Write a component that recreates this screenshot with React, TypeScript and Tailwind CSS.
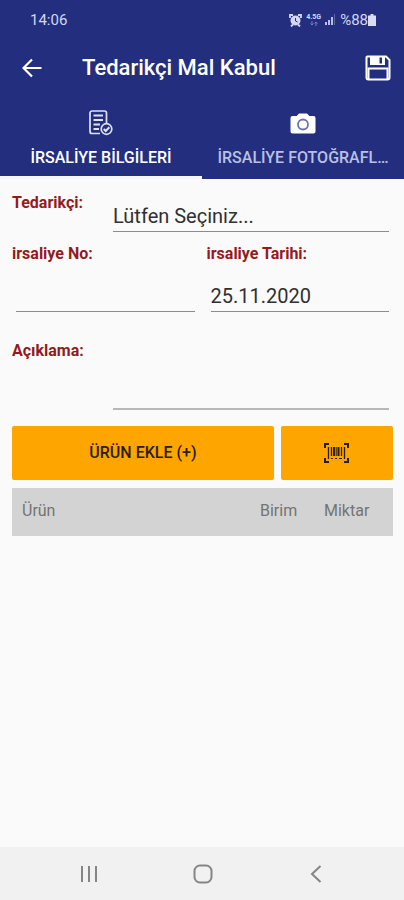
import { useState } from "react";

function AlarmIcon() {
  return (
    <svg width="13" height="13" viewBox="0 0 13 13" fill="none" aria-hidden="true">
      <path d="M1 4V1h3M9 1h3v3M2 12.500l2-2M11 12.500l-2-2" stroke="#d3d7f2" strokeWidth="1.800" />
      <circle cx="6.500" cy="6.500" r="5" fill="#d3d7f2" />
      <path d="M6.500 4v3l2 1" stroke="#232f7e" strokeWidth="1" />
    </svg>
  );
}

function DataArrowsIcon() {
  return (
    <svg width="8" height="5" viewBox="0 0 8 5" fill="none" stroke="#7e86c0" aria-hidden="true">
      <path d="M2 0v4M0.500 2.500 2 4l1.500-1.500M6 5V1M4.500 2.500 6 1l1.500 1.500" strokeWidth="0.900" />
    </svg>
  );
}

function SignalIcon() {
  return (
    <svg width="11" height="12" viewBox="0 0 11 12" fill="#b9bfe6" aria-hidden="true">
      <rect x="0" y="8" width="2" height="3" />
      <rect x="3" y="6" width="2" height="5" />
      <rect x="6" y="3" width="2" height="8" />
      <rect x="9" y="0" width="1" height="11" opacity="0.4" />
    </svg>
  );
}

function BatteryIcon() {
  return (
    <svg width="8" height="12" viewBox="0 0 8 12" fill="#d9dcf5" aria-hidden="true">
      <path d="M2.500 0h3v1.500H8V12H0V1.500h2.500z" />
    </svg>
  );
}

function BackArrow() {
  return (
    <svg width="20" height="20" viewBox="0 0 20 20" fill="none" stroke="white" strokeWidth="2.200" aria-hidden="true">
      <path d="M10 1.500 1.500 10l8.500 8.500M1.500 10h18" />
    </svg>
  );
}

function SaveIcon() {
  return (
    <svg width="26" height="26" viewBox="0 0 26 26" fill="none" stroke="white" aria-hidden="true">
      <path d="M2.500 1.500h18.500L24.500 5v17.500a2 2 0 0 1-2 2h-19a2 2 0 0 1-2-2v-20a1 1 0 0 1 1-1z" strokeWidth="2" />
      <path d="M5 1.500h15v8.500H5z" fill="white" stroke="none" />
      <path d="M14.500 2.500h2.500v6h-2.500z" fill="#232f7e" stroke="none" />
      <path d="M3.500 24V13.500h19V24" strokeWidth="2" />
    </svg>
  );
}

function DocumentIcon() {
  return (
    <svg width="24" height="26" viewBox="0 0 24 26" fill="none" stroke="#dfe2f6" strokeWidth="1.700" aria-hidden="true">
      <path d="M11 23.500H3a2 2 0 0 1-2-2V3a2 2 0 0 1 2-2h12.500a2 2 0 0 1 2 2v10" />
      <path d="M4.500 5.500H14M4.500 10H14M4.500 14.500H11M4.500 19H10" strokeWidth="1.900" />
      <circle cx="17.500" cy="19" r="5.300" />
      <path d="m14.700 19 2 2 3.600-3.800" strokeWidth="2" />
    </svg>
  );
}

function CameraIcon() {
  return (
    <svg width="26" height="21" viewBox="0 0 26 21" aria-hidden="true">
      <path d="M9 0.500h8l2.300 2.500H23.500a2 2 0 0 1 2 2v13.500a2 2 0 0 1-2 2h-21a2 2 0 0 1-2-2V5a2 2 0 0 1 2-2h4.200z" fill="white" />
      <circle cx="13" cy="11.500" r="5" fill="white" stroke="#6d74ab" strokeWidth="1.800" />
    </svg>
  );
}

function BarcodeIcon() {
  return (
    <svg width="25" height="20" viewBox="0 0 25 20" fill="none" stroke="#2b1d00" aria-hidden="true">
      <path d="M1 5V1h4M20 1h4v4M24 15v4h-4M5 19H1v-4" strokeWidth="2" />
      <path d="M4.500 4v12M7.500 4v9M17.500 4v9M20.500 4v12" strokeWidth="1.300" />
      <path d="M10 4v9M14.500 4v9" strokeWidth="2" />
      <path d="M12.200 4v9M7 15.500h2M11 15.500h2M15 15.500h3" strokeWidth="1" />
    </svg>
  );
}

const labelClass = "text-base leading-5 font-bold text-[#931a20]";
const fieldClass =
  "w-full min-w-0 appearance-none rounded-none border-b border-[#8c8c8c] bg-transparent text-xl leading-6 text-[#303030] outline-none";
const tabClass =
  "flex h-[84px] min-w-0 flex-col items-center border-b-3 border-transparent pt-[14px] aria-selected:border-[#f4f6ff]";

export default function App() {
  const [tab, setTab] = useState(0);

  return (
    <div lang="tr" className="flex min-h-screen flex-col bg-[#fafafa] font-['Roboto',sans-serif]">
      <header className="bg-[#232f7e] text-white">
        <div className="flex h-10 items-center justify-between pr-7 pl-[30px] text-[#d3d7f2]">
          <span className="text-[15px] leading-5">14:06</span>
          <div className="flex items-center gap-1">
            <AlarmIcon />
            <span className="flex flex-col items-center">
              <span className="text-[7px] leading-[7px] font-bold">4.5G</span>
              <DataArrowsIcon />
            </span>
            <SignalIcon />
            <span className="flex items-center text-[15px] leading-5">
              %88
              <BatteryIcon />
            </span>
          </div>
        </div>

        <div className="flex h-[55px] items-center pr-[13px] pl-[22px]">
          <button type="button" aria-label="Geri">
            <BackArrow />
          </button>
          <h1 className="ml-10 flex-1 text-[22px] leading-7 font-medium">Tedarikçi Mal Kabul</h1>
          <button type="button" aria-label="Kaydet">
            <SaveIcon />
          </button>
        </div>

        <div role="tablist" className="grid grid-cols-2">
          <button
            type="button"
            role="tab"
            aria-selected={tab === 0}
            onClick={() => setTab(0)}
            className={`${tabClass} text-white`}
          >
            <span className="flex h-7 items-center">
              <DocumentIcon />
            </span>
            <span className="mt-[11px] text-base leading-5 font-medium whitespace-nowrap">İRSALİYE BİLGİLERİ</span>
          </button>
          <button
            type="button"
            role="tab"
            aria-selected={tab === 1}
            onClick={() => setTab(1)}
            className={`${tabClass} text-[#b9c0e4]`}
          >
            <span className="flex h-7 items-center">
              <CameraIcon />
            </span>
            <span className="mt-[11px] text-base leading-5 font-medium whitespace-nowrap">İRSALİYE FOTOĞRAFL…</span>
          </button>
        </div>
      </header>

      <main className="flex-1 pt-[14px] pr-[11px] pl-3">
        <form onSubmit={(event) => event.preventDefault()}>
          <div className="flex pr-1">
            <label htmlFor="supplier" className={`${labelClass} w-[101px] shrink-0`}>
              Tedarikçi:
            </label>
            <select id="supplier" className={`${fieldClass} h-[39px] pt-2`}>
              <option>Lütfen Seçiniz...</option>
            </select>
          </div>

          <div className="mt-3 grid grid-cols-2 gap-3 pr-1">
            <div className="flex flex-col">
              <label htmlFor="waybill-no" className={labelClass}>
                irsaliye No:
              </label>
              <div className="pt-4 pl-1">
                <input id="waybill-no" type="text" className={`${fieldClass} h-8`} />
              </div>
            </div>
            <div className="flex flex-col">
              <label htmlFor="waybill-date" className={labelClass}>
                irsaliye Tarihi:
              </label>
              <div className="pt-4 pl-1">
                <input id="waybill-date" type="text" defaultValue="25.11.2020" className={`${fieldClass} h-8`} />
              </div>
            </div>
          </div>

          <div className="mt-[29px] flex pr-1">
            <label htmlFor="note" className={`${labelClass} w-[101px] shrink-0`}>
              Açıklama:
            </label>
            <textarea id="note" rows={2} className={`${fieldClass} h-[69px] resize-none border-b-2 border-[#b8b8b8]`} />
          </div>

          <div className="mt-4 flex gap-[7px]">
            <button type="button" className="h-[54px] flex-[7] rounded-xs bg-[#ffa500] text-base font-medium text-[#2b1d00]">
              ÜRÜN EKLE (+)
            </button>
            <button
              type="button"
              aria-label="Barkod okut"
              className="flex h-[54px] flex-[3] items-center justify-center rounded-xs bg-[#ffa500]"
            >
              <BarcodeIcon />
            </button>
          </div>
        </form>

        <table className="mt-2 w-full table-fixed bg-[#d3d3d3] text-left text-base text-[#747474]">
          <thead>
            <tr className="h-12">
              <th className="pb-0.5 pl-[10px] font-normal">Ürün</th>
              <th className="w-16 pb-0.5 font-normal">Birim</th>
              <th className="w-[69px] pb-0.5 font-normal">Miktar</th>
            </tr>
          </thead>
        </table>
      </main>

      <nav className="flex h-[53px] items-center justify-between bg-[#f1f1f1] pr-[79px] pl-20 text-[#858585]">
        <button type="button" aria-label="Son uygulamalar">
          <svg width="18" height="18" viewBox="0 0 18 18" stroke="currentColor" strokeWidth="2" aria-hidden="true">
            <path d="M2 1v16M9 1v16M16 1v16" />
          </svg>
        </button>
        <button type="button" aria-label="Ana ekran">
          <svg width="20" height="20" viewBox="0 0 20 20" fill="none" stroke="currentColor" strokeWidth="2" aria-hidden="true">
            <rect x="1.500" y="1.500" width="17" height="17" rx="5.500" />
          </svg>
        </button>
        <button type="button" aria-label="Geri dön">
          <svg width="18" height="18" viewBox="0 0 18 18" fill="none" stroke="currentColor" strokeWidth="2" aria-hidden="true">
            <path d="M13.500 1 5 9l8.500 8" />
          </svg>
        </button>
      </nav>
    </div>
  );
}
